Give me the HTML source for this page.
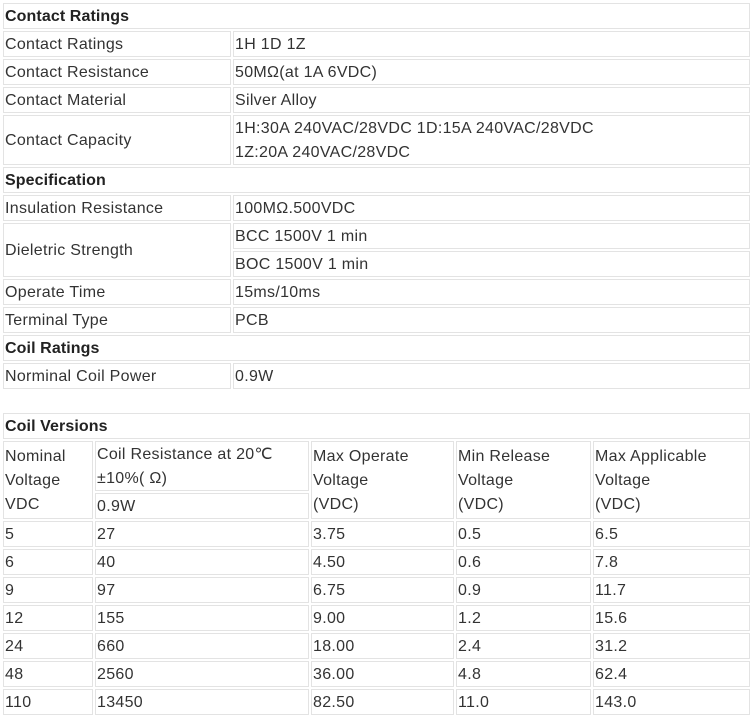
<!DOCTYPE html>
<html><head><meta charset="utf-8"><style>
html,body{margin:0;padding:0;background:#fff;width:751px;height:717px;overflow:hidden;position:relative}
.c{position:absolute;box-sizing:border-box;border:1px solid #e3e3e3;font:16px "Liberation Sans",sans-serif;letter-spacing:0.3px;color:#333;line-height:24px;padding:1px 0 0 1px;white-space:nowrap}
.b{font-weight:bold;color:#222;letter-spacing:0.1px}
</style></head><body>
<div class="c b" style="left:3px;top:3px;width:747px;height:26px">Contact Ratings</div>
<div class="c" style="left:3px;top:31px;width:228px;height:26px">Contact Ratings</div>
<div class="c" style="left:233px;top:31px;width:517px;height:26px">1H 1D 1Z</div>
<div class="c" style="left:3px;top:59px;width:228px;height:26px">Contact Resistance</div>
<div class="c" style="left:233px;top:59px;width:517px;height:26px">50MΩ(at 1A 6VDC)</div>
<div class="c" style="left:3px;top:87px;width:228px;height:26px">Contact Material</div>
<div class="c" style="left:233px;top:87px;width:517px;height:26px">Silver Alloy</div>
<div class="c" style="left:3px;top:115px;width:228px;height:50px;line-height:48px">Contact Capacity</div>
<div class="c" style="left:233px;top:115px;width:517px;height:50px">1H:30A 240VAC/28VDC 1D:15A 240VAC/28VDC<br>1Z:20A 240VAC/28VDC</div>
<div class="c b" style="left:3px;top:167px;width:747px;height:26px">Specification</div>
<div class="c" style="left:3px;top:195px;width:228px;height:26px">Insulation Resistance</div>
<div class="c" style="left:233px;top:195px;width:517px;height:26px">100MΩ.500VDC</div>
<div class="c" style="left:3px;top:223px;width:228px;height:54px;line-height:52px">Dieletric Strength</div>
<div class="c" style="left:233px;top:223px;width:517px;height:26px">BCC 1500V 1 min</div>
<div class="c" style="left:233px;top:251px;width:517px;height:26px">BOC 1500V 1 min</div>
<div class="c" style="left:3px;top:279px;width:228px;height:26px">Operate Time</div>
<div class="c" style="left:233px;top:279px;width:517px;height:26px">15ms/10ms</div>
<div class="c" style="left:3px;top:307px;width:228px;height:26px">Terminal Type</div>
<div class="c" style="left:233px;top:307px;width:517px;height:26px">PCB</div>
<div class="c b" style="left:3px;top:335px;width:747px;height:26px">Coil Ratings</div>
<div class="c" style="left:3px;top:363px;width:228px;height:26px">Norminal Coil Power</div>
<div class="c" style="left:233px;top:363px;width:517px;height:26px">0.9W</div>

<div class="c b" style="left:3px;top:413px;width:747px;height:26px">Coil Versions</div>
<div class="c" style="left:3px;top:441px;width:90px;height:78px;padding-top:3px">Nominal<br>Voltage<br>VDC</div>
<div class="c" style="left:95px;top:441px;width:214px;height:50px">Coil Resistance at 20℃<br>±10%( Ω)</div>
<div class="c" style="left:95px;top:493px;width:214px;height:26px">0.9W</div>
<div class="c" style="left:311px;top:441px;width:143px;height:78px;padding-top:3px">Max Operate<br>Voltage<br>(VDC)</div>
<div class="c" style="left:456px;top:441px;width:135px;height:78px;padding-top:3px">Min Release<br>Voltage<br>(VDC)</div>
<div class="c" style="left:593px;top:441px;width:157px;height:78px;padding-top:3px">Max Applicable<br>Voltage<br>(VDC)</div>

<div class="c" style="left:3px;top:521px;width:90px;height:26px">5</div><div class="c" style="left:95px;top:521px;width:214px;height:26px">27</div><div class="c" style="left:311px;top:521px;width:143px;height:26px">3.75</div><div class="c" style="left:456px;top:521px;width:135px;height:26px">0.5</div><div class="c" style="left:593px;top:521px;width:157px;height:26px">6.5</div>
<div class="c" style="left:3px;top:549px;width:90px;height:26px">6</div><div class="c" style="left:95px;top:549px;width:214px;height:26px">40</div><div class="c" style="left:311px;top:549px;width:143px;height:26px">4.50</div><div class="c" style="left:456px;top:549px;width:135px;height:26px">0.6</div><div class="c" style="left:593px;top:549px;width:157px;height:26px">7.8</div>
<div class="c" style="left:3px;top:577px;width:90px;height:26px">9</div><div class="c" style="left:95px;top:577px;width:214px;height:26px">97</div><div class="c" style="left:311px;top:577px;width:143px;height:26px">6.75</div><div class="c" style="left:456px;top:577px;width:135px;height:26px">0.9</div><div class="c" style="left:593px;top:577px;width:157px;height:26px">11.7</div>
<div class="c" style="left:3px;top:605px;width:90px;height:26px">12</div><div class="c" style="left:95px;top:605px;width:214px;height:26px">155</div><div class="c" style="left:311px;top:605px;width:143px;height:26px">9.00</div><div class="c" style="left:456px;top:605px;width:135px;height:26px">1.2</div><div class="c" style="left:593px;top:605px;width:157px;height:26px">15.6</div>
<div class="c" style="left:3px;top:633px;width:90px;height:26px">24</div><div class="c" style="left:95px;top:633px;width:214px;height:26px">660</div><div class="c" style="left:311px;top:633px;width:143px;height:26px">18.00</div><div class="c" style="left:456px;top:633px;width:135px;height:26px">2.4</div><div class="c" style="left:593px;top:633px;width:157px;height:26px">31.2</div>
<div class="c" style="left:3px;top:661px;width:90px;height:26px">48</div><div class="c" style="left:95px;top:661px;width:214px;height:26px">2560</div><div class="c" style="left:311px;top:661px;width:143px;height:26px">36.00</div><div class="c" style="left:456px;top:661px;width:135px;height:26px">4.8</div><div class="c" style="left:593px;top:661px;width:157px;height:26px">62.4</div>
<div class="c" style="left:3px;top:689px;width:90px;height:26px">110</div><div class="c" style="left:95px;top:689px;width:214px;height:26px">13450</div><div class="c" style="left:311px;top:689px;width:143px;height:26px">82.50</div><div class="c" style="left:456px;top:689px;width:135px;height:26px">11.0</div><div class="c" style="left:593px;top:689px;width:157px;height:26px">143.0</div>
</body></html>
